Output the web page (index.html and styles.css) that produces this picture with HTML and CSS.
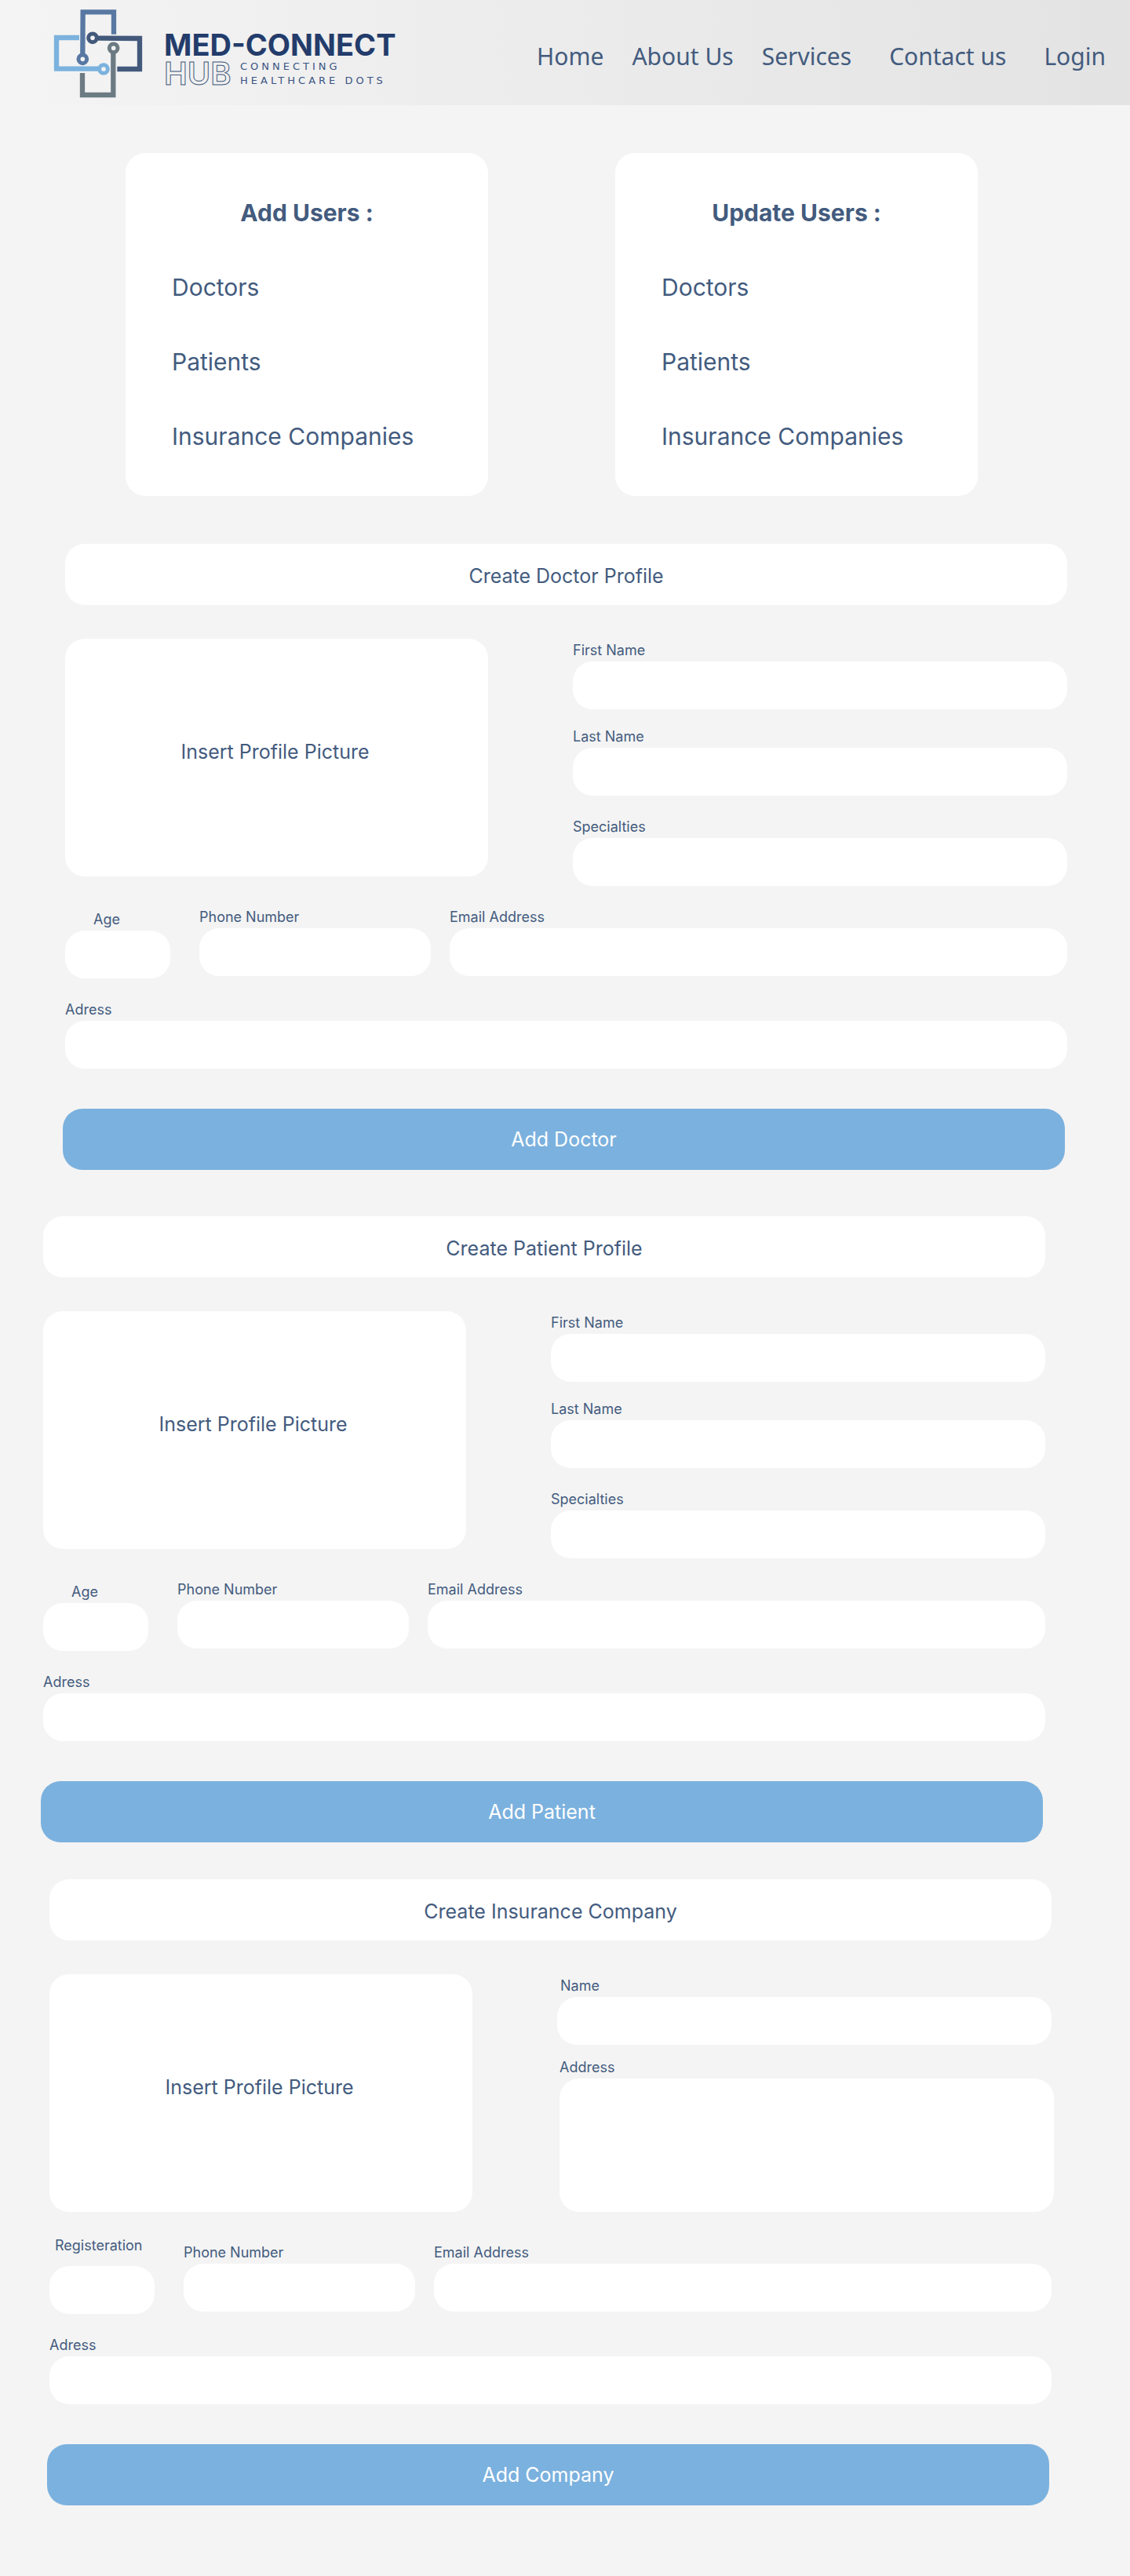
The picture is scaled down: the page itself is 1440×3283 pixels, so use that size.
FILE: index.html
```html
<!DOCTYPE html>
<html lang="en">
<head>
<meta charset="utf-8">
<meta name="viewport" content="width=device-width, initial-scale=1">
<title>Med-Connect Hub – Admin</title>
<link rel="stylesheet" href="styles.css">
</head>
<body>
<header class="header">
  <a class="logo" href="#" aria-label="Med-Connect Hub home">
    <svg class="logo__art" width="440" height="134" viewBox="0 0 440 134">
      <g transform="scale(.3333) translate(-54 0)" fill="none" stroke-width="19">
        <path stroke="#5878a3" d="M285 131V46H167L166 206"/>
        <path stroke="#7bb2de" d="M153 144H66V263H226"/>
        <path stroke="#43597b" d="M224 146L384 147V264H298"/>
        <path stroke="#6c7a83" d="M283 204V363H165V279"/>
        <g stroke-width="15">
          <circle stroke="#5878a3" cx="166" cy="226" r="16"/>
          <circle stroke="#7bb2de" cx="246" cy="264" r="16"/>
          <circle stroke="#43597b" cx="204" cy="145" r="16"/>
          <circle stroke="#6c7a83" cx="284" cy="184" r="16"/>
        </g>
      </g>
      <text class="logo__name" x="141" y="71">MED-CONNECT</text>
      <text class="logo__hub" x="141" y="108">HUB</text>
      <text class="logo__tag" x="238" y="89">CONNECTING</text>
      <text class="logo__tag" x="238" y="107">HEALTHCARE DOTS</text>
    </svg>
  </a>
  <nav class="nav">
    <div class="nav__group">
      <a href="#">Home</a>
      <a href="#">About Us</a>
      <a href="#">Services</a>
    </div>
    <a href="#">Contact us</a>
    <a href="#">Login</a>
  </nav>
</header>

<main>
  <div class="cards">
    <section class="card">
      <h2 class="card__title">Add Users :</h2>
      <a href="#doctor">Doctors</a>
      <a href="#patient">Patients</a>
      <a href="#company">Insurance Companies</a>
    </section>
    <section class="card">
      <h2 class="card__title">Update Users :</h2>
      <a href="#doctor">Doctors</a>
      <a href="#patient">Patients</a>
      <a href="#company">Insurance Companies</a>
    </section>
  </div>

  <form class="form form--doctor" id="doctor">
    <h2 class="form__title">Create Doctor Profile</h2>
    <div class="form__top">
      <button class="picture" type="button">Insert Profile Picture</button>
      <div class="form__names">
        <div class="field"><label for="d-first">First Name</label><input id="d-first" type="text"></div>
        <div class="field"><label for="d-last">Last Name</label><input id="d-last" type="text"></div>
        <div class="field field--spaced"><label for="d-spec">Specialties</label><input id="d-spec" type="text"></div>
      </div>
    </div>
    <div class="form__row">
      <div class="field field--age"><label for="d-age">Age</label><input id="d-age" type="text"></div>
      <div class="field"><label for="d-phone">Phone Number</label><input id="d-phone" type="tel"></div>
      <div class="field"><label for="d-email">Email Address</label><input id="d-email" type="email"></div>
    </div>
    <div class="field"><label for="d-address">Adress</label><input id="d-address" type="text"></div>
    <button class="submit" type="submit">Add Doctor</button>
  </form>

  <form class="form form--patient" id="patient">
    <h2 class="form__title">Create Patient Profile</h2>
    <div class="form__top">
      <button class="picture" type="button">Insert Profile Picture</button>
      <div class="form__names">
        <div class="field"><label for="p-first">First Name</label><input id="p-first" type="text"></div>
        <div class="field"><label for="p-last">Last Name</label><input id="p-last" type="text"></div>
        <div class="field field--spaced"><label for="p-spec">Specialties</label><input id="p-spec" type="text"></div>
      </div>
    </div>
    <div class="form__row">
      <div class="field field--age"><label for="p-age">Age</label><input id="p-age" type="text"></div>
      <div class="field"><label for="p-phone">Phone Number</label><input id="p-phone" type="tel"></div>
      <div class="field"><label for="p-email">Email Address</label><input id="p-email" type="email"></div>
    </div>
    <div class="field"><label for="p-address">Adress</label><input id="p-address" type="text"></div>
    <button class="submit" type="submit">Add Patient</button>
  </form>

  <form class="form form--company" id="company">
    <h2 class="form__title">Create Insurance Company</h2>
    <div class="form__top">
      <button class="picture" type="button">Insert Profile Picture</button>
      <div class="form__names form__names--company">
        <div class="field field--name"><label for="c-name">Name</label><input id="c-name" type="text"></div>
        <div class="field field--block"><label for="c-location">Address</label><textarea id="c-location"></textarea></div>
      </div>
    </div>
    <div class="form__row">
      <div class="field field--registration"><label for="c-reg">Registeration</label><input id="c-reg" type="text"></div>
      <div class="field"><label for="c-phone">Phone Number</label><input id="c-phone" type="tel"></div>
      <div class="field"><label for="c-email">Email Address</label><input id="c-email" type="email"></div>
    </div>
    <div class="field"><label for="c-address">Adress</label><input id="c-address" type="text"></div>
    <button class="submit" type="submit">Add Company</button>
  </form>
</main>
</body>
</html>
```
FILE: styles.css
```css
:root {
  --ink: #435b7e;
  --page: #f4f4f4;
  --blue: #7bb1de;
  --radius: 25px;
}

* { box-sizing: border-box; }

body {
  margin: 0;
  background: var(--page);
  color: var(--ink);
  font-family: Inter, "Liberation Sans", sans-serif;
  font-weight: 400;
}

a { color: inherit; text-decoration: none; }

/* Header */
.header {
  display: flex;
  justify-content: space-between;
  padding: 0 31px 0 68px;
  background: linear-gradient(90deg, #f4f4f4, #e3e3e3);
}

.logo__art { display: block; }
.logo__name { font-size: 38px; font-weight: 700; fill: #233c6b; }
.logo__hub {
  font-size: 40px;
  font-weight: 600;
  fill: none;
  stroke: #43597b;
  stroke-width: 1px;
}
.logo__tag {
  font-family: "DejaVu Sans", sans-serif;
  font-size: 13px;
  letter-spacing: 4px;
  fill: #3a5483;
}

.nav {
  display: flex;
  align-items: center;
  gap: 48px;
  padding-top: 10px;
  font: 30px/40px "Noto Sans", sans-serif;
  white-space: nowrap;
}
.nav__group { display: flex; gap: 36px; }

/* User shortcuts */
.cards {
  display: grid;
  grid-template-columns: 1fr 1fr;
  gap: 162px;
  padding: 61px 194px 61px 160px;
}

.card {
  display: flex;
  flex-direction: column;
  gap: 59px;
  padding: 58px 59px;
  border-radius: var(--radius);
  background: #fff;
  font-size: 30px;
  line-height: 36px;
}
.card__title {
  margin: 0;
  font-size: 30px;
  font-weight: 700;
  text-align: center;
}

/* Profile forms */
.form { display: flex; flex-direction: column; }
.form--doctor { margin: 0 80px 59px 83px; }
.form--patient { margin: 0 108px 47px 55px; }
.form--company { margin: 0 100px 90px 63px; }

.form__title {
  margin: 0 0 43px;
  padding: 26px 24px 22px;
  border-radius: var(--radius);
  background: #fff;
  font-size: 25px;
  font-weight: 400;
  line-height: 30px;
  text-align: center;
}

.form__top {
  display: grid;
  grid-template-columns: 539fr 630fr;
  align-items: start;
  gap: 108px;
  margin-bottom: 29px;
}
.form--company .form__top { margin-bottom: 41px; }

.picture {
  height: 303px;
  padding: 0 4px 15px 0;
  border: 0;
  border-radius: var(--radius);
  background: #fff;
  color: inherit;
  font: inherit;
  font-size: 25px;
}

.form__names {
  display: flex;
  flex-direction: column;
  gap: 24px;
  padding-top: 4px;
}
.form__names--company { gap: 18px; }

.form__row {
  display: grid;
  grid-template-columns: 147px 295px 1fr;
  align-items: start;
  gap: 24px;
  margin-bottom: 29px;
}

.field {
  display: flex;
  flex-direction: column;
  gap: 3px;
  font-size: 18px;
  line-height: 22px;
}
.field input,
.field textarea {
  width: 100%;
  height: 61px;
  padding: 0 20px;
  border: 0;
  border-radius: var(--radius);
  background: #fff;
  color: inherit;
  font: inherit;
}
.field textarea { display: block; height: 170px; padding: 20px; resize: none; }

.field--spaced { margin-top: 5px; }
.field--age { margin: 3px 13px 0 0; }
.field--age label { padding-left: 36px; }
.field--registration { gap: 15px; margin: -9px 13px 0 0; }
.field--registration label { padding-left: 7px; }
.field--name label { padding-left: 4px; }
.field--block { margin: 0 -3px 0 3px; }

.submit {
  height: 78px;
  margin: 51px 3px 0 -3px;
  border: 0;
  border-radius: var(--radius);
  background: var(--blue);
  color: #fff;
  font: inherit;
  font-size: 25px;
}
```
